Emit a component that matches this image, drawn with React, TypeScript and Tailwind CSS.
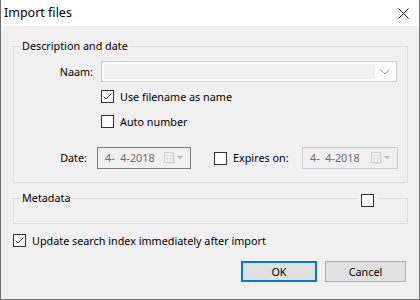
import React from 'react';

function CheckBox({ checked }: { checked?: boolean }) {
  return (
    <span className="flex h-[13px] w-[13px] shrink-0 items-center justify-center border border-[#333333] bg-white">
      {checked && (
        <svg width="11" height="11" viewBox="0 0 11 11">
          <path d="M1.5 5.5 L4 8 L9.5 2.5" fill="none" stroke="#555555" strokeWidth="1" />
        </svg>
      )}
    </span>
  );
}

function CalendarIcon() {
  return (
    <svg width="20" height="12" viewBox="0 0 20 12" className="shrink-0">
      {/* little calendar */}
      <rect x="0.5" y="0.5" width="9" height="10" fill="#f4f4f4" stroke="#cfcfcf" />
      <path d="M3.5 3 V10 M6.5 3 V10 M1 3.5 H9 M1 6.5 H9" stroke="#dddddd" strokeWidth="1" />
      <path d="M10.5 1.5 V11.5 H1.5" fill="none" stroke="#e4e4e4" />
      {/* drop arrow */}
      <path d="M13 4 H19 L16 7 Z" fill="#b0b0b0" />
    </svg>
  );
}

function DateBox({ className }: { className: string }) {
  return (
    <div className={`flex h-[22px] items-center justify-between pl-[7px] pr-[6px] text-[#6d6d6d] ${className}`}>
      <span className="whitespace-pre">{'4-  4-2018'}</span>
      <CalendarIcon />
    </div>
  );
}

export default function App() {
  return (
    <div className="flex h-[300px] w-[420px] flex-col border-x border-b border-[#6f6f6f] bg-[#f0f0f0] font-['Noto_Sans',sans-serif] text-[10.8px] leading-[16px] text-black">
      {/* Title bar */}
      <div className="flex h-[26px] shrink-0 items-center justify-between bg-white pl-[3px] pr-[10px]">
        <span className="text-[12.5px]">Import files</span>
        <svg width="11" height="11" viewBox="0 0 11 11">
          <path d="M0.5 0.5 L10.5 10.5 M10.5 0.5 L0.5 10.5" stroke="#111111" strokeWidth="1" />
        </svg>
      </div>

      <div className="flex flex-col pl-[12px] pr-[11px]">
        {/* Description and date */}
        <fieldset className="mt-[12px] border border-[#dcdcdc]">
          <legend className="ml-[7px] px-[1px]">Description and date</legend>
          <div className="flex flex-col pt-[7px] pb-[13px]">
            <div className="flex items-center">
              <span className="w-[79px] text-right">Naam:</span>
              <div className="ml-[8px] flex h-[21px] w-[296px] border border-[#cccccc] bg-white p-[2px]">
                <div className="flex-1 bg-[#f0f0f0]" />
                <div className="flex w-[19px] items-center justify-center">
                  <svg width="10" height="6" viewBox="0 0 10 6">
                    <path d="M0.5 0.5 L5 5 L9.5 0.5" fill="none" stroke="#a8a8a8" />
                  </svg>
                </div>
              </div>
            </div>
            <div className="mt-[8px] ml-[87px] flex h-[13px] items-center">
              <CheckBox checked />
              <span className="ml-[6px]">Use filename as name</span>
            </div>
            <div className="mt-[12px] ml-[87px] flex h-[13px] items-center">
              <CheckBox />
              <span className="ml-[6px]">Auto number</span>
            </div>
            <div className="mt-[19px] flex items-center">
              <span className="w-[73px] text-right">Date:</span>
              <DateBox className="ml-[10px] w-[94px] border border-[#7a7a7a]" />
              <span className="ml-[23px]">
                <CheckBox />
              </span>
              <span className="ml-[6px] w-[69px]">Expires on:</span>
              <DateBox className="w-[96px] border border-[#cccccc]" />
            </div>
          </div>
        </fieldset>

        {/* Metadata */}
        <fieldset className="relative mt-[7px] border border-[#dcdcdc]">
          <legend className="ml-[7px] px-[1px]">Metadata</legend>
          <div className="h-[17px]" />
          <span className="absolute top-[-12px] left-[343px] bg-[#f0f0f0] px-[4px]">
            <CheckBox />
          </span>
        </fieldset>

        <div className="mt-[10px] flex h-[13px] items-center">
          <CheckBox checked />
          <span className="ml-[6px]">Update search index immediately after import</span>
        </div>

        <div className="mt-[14px] mr-[2px] flex justify-end gap-[8px]">
          <button className="h-[21px] w-[76px] border-2 border-[#0078d7] bg-[#e1e1e1]">OK</button>
          <button className="h-[21px] w-[81px] border border-[#adadad] bg-[#e1e1e1]">Cancel</button>
        </div>
      </div>
    </div>
  );
}
